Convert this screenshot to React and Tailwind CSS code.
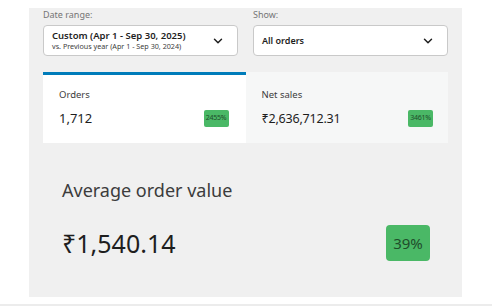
import { ChevronDown } from "lucide-react";

function Badge({ children }){
  return (
    <span className="inline-flex items-center justify-center h-[17px] px-[2px] rounded-[2px] bg-[#4ab866] text-[7px] tracking-[-0.2px] text-[#1f4d2b]">{children}</span>
  );
}

function Select({ children }){
  return (
    <div className="h-[31px] flex items-center justify-between rounded-[4px] border border-[#c9c9c9] bg-white pl-[8px] pr-[12px]">
      <div className="min-w-0">{children}</div>
      <ChevronDown size={14} strokeWidth={2.5} className="text-[#1e1e1e]" />
    </div>
  );
}

export default function App(){
  return (
    <div className="min-h-screen bg-white font-['Noto_Sans',sans-serif] text-[#1e1e1e]">
      <div className="ml-[29px] mt-[8px] w-[433px] h-[289px] bg-[#f0f0f0] px-[14px]">
        <div className="grid grid-cols-2 gap-[15px]">
          <div>
            <div className="text-[9px] leading-[14px] text-[#757575]">Date range:</div>
            <div className="mt-[3px]">
              <Select>
                <div className="text-[9.5px] leading-[11px] font-semibold">Custom (Apr 1 - Sep 30, 2025)</div>
                <div className="text-[7.2px] leading-[10px] text-[#3c3c3c]">vs. Previous year (Apr 1 - Sep 30, 2024)</div>
              </Select>
            </div>
          </div>
          <div>
            <div className="text-[9px] leading-[14px] text-[#757575]">Show:</div>
            <div className="mt-[3px]">
              <Select>
                <div className="text-[9px] font-semibold">All orders</div>
              </Select>
            </div>
          </div>
        </div>

        <div className="mt-[16px] grid grid-cols-2">
          <div className="h-[71px] bg-white border-t-[3px] border-[#007cba] pl-[16px] pr-[17px] pt-[14px]">
            <div className="text-[9.5px] leading-[12px] text-[#3c3c3c]">Orders</div>
            <div className="mt-[9px] flex items-center justify-between">
              <span className="text-[13px] leading-[17px]">1,712</span>
              <Badge>2455%</Badge>
            </div>
          </div>
          <div className="h-[71px] bg-[#f6f7f7] pl-[16px] pr-[15px] pt-[17px]">
            <div className="text-[9.5px] leading-[12px] text-[#3c3c3c]">Net sales</div>
            <div className="mt-[9px] flex items-center justify-between">
              <span className="text-[12.5px] leading-[17px] tracking-[-0.2px]">₹2,636,712.31</span>
              <Badge>3461%</Badge>
            </div>
          </div>
        </div>

        <div className="pl-[19px] pr-[18px] pt-[34px]">
          <div className="text-[18px] leading-[26px] text-[#3c3c3c]">Average order value</div>
          <div className="mt-[22px] flex items-center justify-between">
            <span className="text-[25px] leading-[32px]">₹1,540.14</span>
            <span className="inline-flex items-center justify-center w-[44px] h-[36px] rounded-[4px] bg-[#4ab866] text-[15px] text-[#1f4d2b]">39%</span>
          </div>
        </div>
      </div>
      <div className="mt-[7px] h-[2px] bg-[#ececec]" />
    </div>
  );
}
